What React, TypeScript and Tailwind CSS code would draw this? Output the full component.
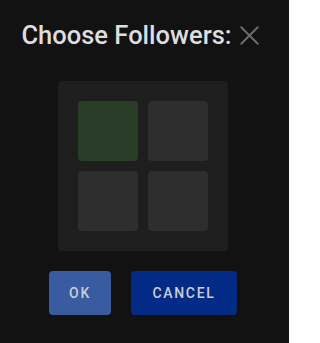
import { X } from 'lucide-react';

const cells = ['bg-[#293d29]', 'bg-[#2e2e2e]', 'bg-[#2e2e2e]', 'bg-[#2e2e2e]'];

export default function App() {
  return (
    <div className="flex h-[343px] w-[289px] flex-col items-center bg-[#121212] pr-[3px] pt-[19px] font-['Roboto',sans-serif]">
      <div className="ml-[1px] flex h-8 items-center gap-px">
        <h2 className="text-[25.5px] font-medium leading-8 text-[#dedede]">Choose Followers:</h2>
        <X className="h-[33px] w-[33px] text-[#6e6e6e]" strokeWidth={1.35} />
      </div>
      <div className="mt-[30px] grid h-[170px] w-[170px] grid-cols-2 gap-[10px] rounded bg-[#1e1e1e] p-5">
        {cells.map((c, i) => (
          <div key={i} className={`rounded ${c}`} />
        ))}
      </div>
      <div className="mt-5 flex gap-5">
        <button className="h-[44px] w-[62px] rounded bg-[#395b9f] text-[14px] font-medium tracking-[0.12em] text-[#c9cfda]">
          OK
        </button>
        <button className="h-[44px] w-[106px] rounded bg-[#032b86] text-[14px] font-medium tracking-[0.12em] text-[#c9cfda]">
          CANCEL
        </button>
      </div>
    </div>
  );
}
